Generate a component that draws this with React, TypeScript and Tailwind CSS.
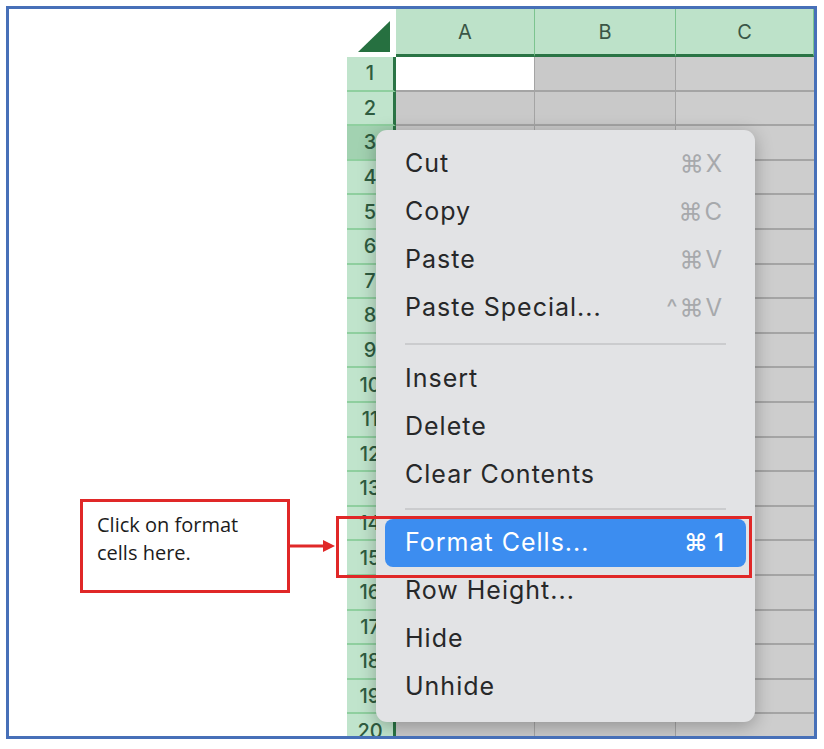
import React from "react";

const rows = Array.from({ length: 20 }, (_, i) => i + 1);

const menuFont = { fontFamily: "Inter, 'Liberation Sans', 'DejaVu Sans', sans-serif" };

type Item = { label: string; keys?: string };

const groupOne: Item[] = [
  { label: "Cut", keys: "⌘X" },
  { label: "Copy", keys: "⌘C" },
  { label: "Paste", keys: "⌘V" },
  { label: "Paste Special...", keys: "^⌘V" },
];
const groupTwo: Item[] = [{ label: "Insert" }, { label: "Delete" }, { label: "Clear Contents" }];
const groupThree: Item[] = [{ label: "Row Height..." }, { label: "Hide" }, { label: "Unhide" }];

const MenuRow = ({ item }: { item: Item }) => (
  <div className="mx-[9px] h-[48px] flex items-center justify-between pl-[20px] pr-[22px]">
    <span className="text-[25px] text-[#272829] tracking-[0.04em]">{item.label}</span>
    {item.keys && <span className="text-[24px] text-[#a7a9ac] tracking-[0.08em]">{item.keys}</span>}
  </div>
);

const Sheet = () => (
  <div className="relative flex-1 overflow-hidden bg-[#cbcbcb]" style={menuFont}>
    <div className="flex h-[48px]">
      <div className="w-[49px] h-full bg-white flex items-end justify-end pr-[6px] pb-[5px]">
        <svg width="32" height="31" viewBox="0 0 32 31">
          <polygon points="0,31 32,31 32,0" fill="#267040" />
        </svg>
      </div>
      {[
        ["A", "w-[139px]"],
        ["B", "w-[141px]"],
        ["C", "flex-1"],
      ].map(([l, w]) => (
        <div
          key={l}
          className={`${w} h-full bg-[#bde2c9] border-b-[3px] border-b-[#2a7445] border-r border-r-[#7cc48f] flex items-center justify-center text-[20px] text-[#3a5646]`}
        >
          {l}
        </div>
      ))}
    </div>
    {rows.map((r) => (
      <div key={r} className="flex h-[34.6px]">
        <div
          className={`w-[49px] h-full border-r-[3px] border-r-[#2a7445] border-b-2 border-b-[#8fcf9f] flex items-center justify-center text-[20px] font-medium text-[#2f5c40] ${
            r === 3 ? "bg-[#a2d2b1]" : "bg-[#c0e4cc]"
          }`}
        >
          {r}
        </div>
        <div
          className={`w-[139px] h-full border-b-2 border-r border-[#a4a4a4] ${r === 1 ? "bg-white" : "bg-[#c9c9c9]"}`}
        />
        <div className="w-[141px] h-full border-b-2 border-r border-[#a4a4a4] bg-[#c9c9c9]" />
        <div className="flex-1 h-full border-b-2 border-[#a4a4a4] bg-[#cdcdcd]" />
      </div>
    ))}

    <div className="absolute left-[29px] top-[121px] w-[379px] h-[592px] rounded-[11px] bg-[#e2e3e5] shadow-[0_4px_18px_rgba(0,0,0,0.28)] py-[10px]">
      {groupOne.map((it) => (
        <MenuRow key={it.label} item={it} />
      ))}
      <div className="h-[23px] flex items-center px-[29px]">
        <div className="h-[2px] w-full bg-[#cbccce]" />
      </div>
      {groupTwo.map((it) => (
        <MenuRow key={it.label} item={it} />
      ))}
      <div className="h-[20px] flex items-center px-[29px]">
        <div className="h-[2px] w-full bg-[#cbccce]" />
      </div>
      <div className="mx-[9px] h-[48px] rounded-[8px] bg-[#3c8df0] flex items-center justify-between pl-[20px] pr-[22px]">
        <span className="text-[25px] text-white tracking-[0.04em]">Format Cells...</span>
        <span className="text-[24px] text-white font-medium">⌘ 1</span>
      </div>
      {groupThree.map((it) => (
        <MenuRow key={it.label} item={it} />
      ))}
    </div>
  </div>
);

export default function App() {
  return (
    <div className="relative w-[824px] h-[749px] bg-white pt-[6px] pl-[6px] pr-[7px] pb-[10px]">
      <div className="h-full border-[3px] border-[#4770b8] flex overflow-hidden">
        <div className="w-[338px] pl-[71px] pt-[490px]">
          <div className="flex items-center">
            <div
              className="w-[210px] h-[94px] border-[3px] border-[#e02828] pl-[14px] pt-[9px] text-[20px] font-medium leading-[28px] text-[#1c1c1c]"
              style={{ fontFamily: "'Open Sans', Lato, sans-serif" }}
            >
              Click on format
              <br />
              cells here.
            </div>
            <svg width="46" height="14" viewBox="0 0 46 14" className="-ml-[1px]">
              <line x1="0" y1="7" x2="36" y2="7" stroke="#e02828" strokeWidth="3" />
              <polygon points="34,1 46,7 34,13" fill="#e02828" />
            </svg>
          </div>
        </div>
        <Sheet />
      </div>
      <div className="absolute left-[336px] top-[516px] w-[416px] h-[62px] border-[3px] border-[#e02828] pointer-events-none" />
    </div>
  );
}
